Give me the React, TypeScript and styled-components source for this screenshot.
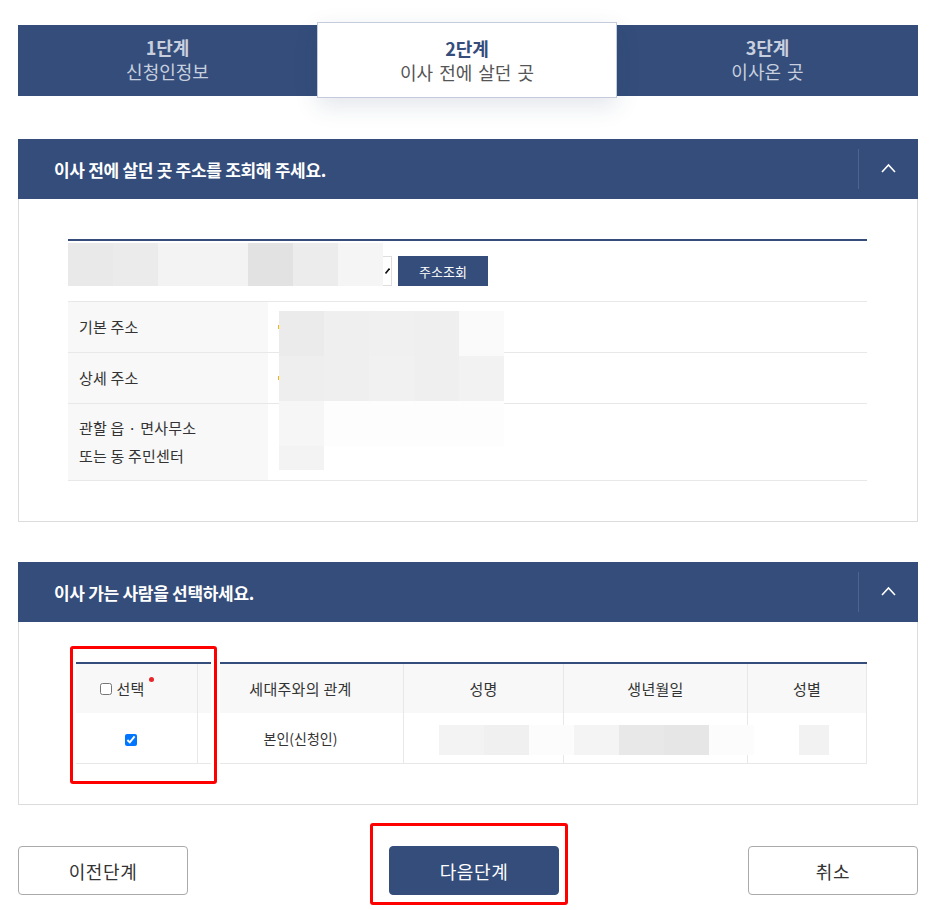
import React from 'react';
import styled, { createGlobalStyle } from 'styled-components';

const NAVY = '#344d7a';

const GlobalStyle = createGlobalStyle`
  body {
    margin: 0;
    background: #fff;
    font-family: 'Noto Sans CJK KR', 'Noto Sans', sans-serif;
    color: #333;
  }
`;

const steps = [
  { no: '1단계', name: '신청인정보', active: false },
  { no: '2단계', name: '이사 전에 살던 곳', active: true },
  { no: '3단계', name: '이사온 곳', active: false },
];

const searchTiles = ['#e9e9e9', '#ebebeb', '#f3f3f3', '#f3f3f3', '#e2e2e2', '#ececec', '#f5f5f5'];

const addressTiles = [
  { h: 45, colors: ['#ebebeb', '#efefef', '#f0f0f0', '#efefef', '#fafafa'] },
  { h: 45, colors: ['#eeeeee', '#efefef', '#f1f1f1', '#efefef', '#f2f2f2'] },
  { h: 45, colors: ['#f6f6f6', '#fdfdfd', '#fdfdfd', '#fdfdfd', '#fdfdfd'] },
  { h: 24, colors: ['#f3f3f3'] },
];

const personTiles = ['#f3f3f3', '#f0f0f0', '#fcfcfc', '#f4f4f4', '#e8e8e8', '#e5e6e5', '#fcfcfc'];

const addressRows = [
  { label: ['기본 주소'], h: 50, mark: true },
  { label: ['상세 주소'], h: 50, mark: true },
  { label: ['관할 읍 · 면사무소', '또는 동 주민센터'], h: 76, mark: false },
];

const Chevron = () => (
  <svg width="15" height="10" viewBox="0 0 15 10">
    <polyline points="1,9 7.5,2 14,9" fill="none" stroke="#fff" strokeWidth="1.6" />
  </svg>
);

const Mosaic: React.FC<{ colors: string[]; w: number; h: number }> = ({ colors, w, h }) => (
  <TileRow>
    {colors.map((c, i) => (
      <Tile key={i} $c={c} $w={w} $h={h} />
    ))}
  </TileRow>
);

const App: React.FC = () => {
  return (
    <>
      <GlobalStyle />
      <Page>
        <Steps>
          {steps.map((s) => (
            <Step key={s.no} $active={s.active}>
              <StepNo $active={s.active}>{s.no}</StepNo>
              <StepName $active={s.active}>{s.name}</StepName>
            </Step>
          ))}
        </Steps>

        <Section $gap={43}>
          <SectionHeader>
            <SectionTitle>이사 전에 살던 곳 주소를 조회해 주세요.</SectionTitle>
            <Toggle>
              <Chevron />
            </Toggle>
          </SectionHeader>
          <SectionBody>
            <SearchRow>
              <Mosaic colors={searchTiles} w={45} h={43} />
              <SelectStub>
                <svg width="5" height="6" viewBox="0 0 5 6">
                  <line x1="0.5" y1="5.5" x2="4.5" y2="0.5" stroke="#111" strokeWidth="1.6" />
                </svg>
              </SelectStub>
              <SearchButton>주소조회</SearchButton>
            </SearchRow>
            <AddressTableWrap>
              <AddressTable>
                {addressRows.map((r) => (
                  <React.Fragment key={r.label[0]}>
                    <LabelCell $h={r.h}>
                      {r.label.map((l) => (
                        <LabelLine key={l}>{l}</LabelLine>
                      ))}
                    </LabelCell>
                    <ValueCell $h={r.h}>{r.mark && <Mark />}</ValueCell>
                  </React.Fragment>
                ))}
              </AddressTable>
              <Redaction $top={10} $left={211}>
                {addressTiles.map((row, i) => (
                  <Mosaic key={i} colors={row.colors} w={45} h={row.h} />
                ))}
              </Redaction>
            </AddressTableWrap>
          </SectionBody>
        </Section>

        <Section $gap={40}>
          <SectionHeader>
            <SectionTitle>이사 가는 사람을 선택하세요.</SectionTitle>
            <Toggle>
              <Chevron />
            </Toggle>
          </SectionHeader>
          <SectionBody>
            <PersonTableWrap>
              <PersonTable>
                <colgroup>
                  <col style={{ width: 129 }} />
                  <col style={{ width: 206 }} />
                  <col style={{ width: 160 }} />
                  <col style={{ width: 184 }} />
                  <col style={{ width: 119 }} />
                </colgroup>
                <thead>
                  <tr>
                    <Th>
                      <SelectHead>
                        <CheckBox type="checkbox" readOnly />
                        선택
                        <RequiredDot />
                      </SelectHead>
                    </Th>
                    <Th>세대주와의 관계</Th>
                    <Th>성명</Th>
                    <Th>생년월일</Th>
                    <Th>성별</Th>
                  </tr>
                </thead>
                <tbody>
                  <tr>
                    <Td>
                      <CheckBox type="checkbox" checked readOnly />
                    </Td>
                    <Td>본인(신청인)</Td>
                    <Td />
                    <Td />
                    <Td />
                  </tr>
                </tbody>
              </PersonTable>
              <Redaction $top={63} $left={371}>
                <Mosaic colors={personTiles} w={45} h={30} />
              </Redaction>
              <Redaction $top={63} $left={731}>
                <Mosaic colors={['#f2f2f2']} w={30} h={30} />
              </Redaction>
            </PersonTableWrap>
            <Highlight $top={24} $left={51} $w={147} $h={138} />
          </SectionBody>
        </Section>

        <ButtonRow>
          <OutlineButton>이전단계</OutlineButton>
          <PrimaryButton>다음단계</PrimaryButton>
          <OutlineButton>취소</OutlineButton>
          <Highlight $top={-23} $left={352} $w={198} $h={82} />
        </ButtonRow>
      </Page>
    </>
  );
};

export default App;

const Page = styled.div`
  width: 900px;
  margin-left: 18px;
  padding: 25px 0 16px;
`;

const Steps = styled.div`
  display: grid;
  grid-template-columns: 299px 300px 1fr;
  height: 71px;
  background: ${NAVY};
`;

const Step = styled.div<{ $active: boolean }>`
  display: flex;
  flex-direction: column;
  align-items: center;
  padding-top: ${({ $active }) => ($active ? '13px' : '10px')};
  box-sizing: border-box;
  ${({ $active }) =>
    $active &&
    `
    margin: -3px 0 -2px;
    background: #fff;
    border: 1px solid #c3cbdc;
    box-shadow: 0 8px 22px rgba(40, 60, 100, 0.13);
  `}
`;

const StepNo = styled.div<{ $active: boolean }>`
  font-size: 18px;
  font-weight: 700;
  line-height: 24px;
  color: ${({ $active }) => ($active ? NAVY : '#c8d0df')};
`;

const StepName = styled.div<{ $active: boolean }>`
  font-size: 18px;
  line-height: 24px;
  word-spacing: 2px;
  color: ${({ $active }) => ($active ? '#555' : '#c8d0df')};
`;

const Section = styled.section<{ $gap: number }>`
  margin-top: ${({ $gap }) => $gap}px;
`;

const SectionHeader = styled.div`
  display: flex;
  align-items: center;
  height: 60px;
  padding-left: 36px;
  background: ${NAVY};
`;

const SectionTitle = styled.h2`
  flex: 1;
  margin: 0;
  font-size: 17px;
  font-weight: 700;
  letter-spacing: -0.3px;
  color: #fff;
`;

const Toggle = styled.div`
  display: flex;
  align-items: center;
  justify-content: center;
  width: 60px;
  height: 40px;
  padding-bottom: 2px;
  border-left: 1px solid rgba(255, 255, 255, 0.13);
  box-sizing: border-box;
`;

const SectionBody = styled.div`
  position: relative;
  padding: 40px 50px 40px 49px;
  border: 1px solid #dcdcdc;
  border-top: none;
`;

const SearchRow = styled.div`
  display: flex;
  align-items: flex-end;
  padding-top: 2px;
  border-top: 2px solid ${NAVY};
`;

const TileRow = styled.div`
  display: flex;
`;

const Tile = styled.div<{ $c: string; $w: number; $h: number }>`
  width: ${({ $w }) => $w}px;
  height: ${({ $h }) => $h}px;
  background: ${({ $c }) => $c};
`;

const SelectStub = styled.div`
  display: flex;
  align-items: center;
  width: 9px;
  height: 30px;
  padding-left: 2px;
  border: 1px solid #dedede;
  border-left: none;
  box-sizing: border-box;
`;

const SearchButton = styled.button`
  width: 90px;
  height: 30px;
  margin-left: 6px;
  border: none;
  background: ${NAVY};
  color: #fff;
  font-family: inherit;
  font-size: 13px;
`;

const AddressTableWrap = styled.div`
  position: relative;
  margin-top: 15px;
`;

const AddressTable = styled.div`
  display: grid;
  grid-template-columns: 200px 1fr;
  border-top: 1px solid #e8e8e8;
`;

const LabelCell = styled.div<{ $h: number }>`
  display: flex;
  flex-direction: column;
  justify-content: center;
  min-height: ${({ $h }) => $h}px;
  padding-left: 11px;
  background: #f8f8f8;
  border-bottom: 1px solid #e8e8e8;
`;

const LabelLine = styled.div`
  font-size: 15px;
  line-height: 28px;
  letter-spacing: 0.2px;
  color: #333;
`;

const ValueCell = styled.div<{ $h: number }>`
  display: flex;
  align-items: center;
  min-height: ${({ $h }) => $h}px;
  padding-left: 10px;
  border-bottom: 1px solid #e8e8e8;
`;

const Mark = styled.span`
  width: 2px;
  height: 4px;
  background: #f5b400;
`;

const Redaction = styled.div<{ $top: number; $left: number }>`
  position: absolute;
  top: ${({ $top }) => $top}px;
  left: ${({ $left }) => $left}px;
`;

const PersonTableWrap = styled.div`
  position: relative;
  width: 798px;
`;

const PersonTable = styled.table`
  width: 798px;
  border-collapse: collapse;
  table-layout: fixed;
  border-top: 2px solid ${NAVY};
  font-size: 15px;
  color: #333;
`;

const Th = styled.th`
  height: 49px;
  padding: 0;
  font-weight: 400;
  letter-spacing: 0.3px;
  background: #f8f8f8;
  border-left: 1px solid #e8e8e8;
  border-right: 1px solid #e8e8e8;
  text-align: center;
`;

const Td = styled.td`
  height: 50px;
  padding: 0;
  font-size: 14px;
  text-align: center;
  border-left: 1px solid #e8e8e8;
  border-right: 1px solid #e8e8e8;
  border-bottom: 1px solid #e8e8e8;
`;

const SelectHead = styled.span`
  display: inline-flex;
  align-items: center;
  margin-right: 12px;
`;

const CheckBox = styled.input`
  width: 12px;
  height: 12px;
  margin: 0 4px 0 0;
  vertical-align: middle;
`;

const RequiredDot = styled.span`
  width: 5px;
  height: 5px;
  margin: -18px 0 0 4px;
  border-radius: 50%;
  background: #e8262b;
`;

const ButtonRow = styled.div`
  position: relative;
  display: flex;
  justify-content: space-between;
  margin-top: 41px;
`;

const OutlineButton = styled.button`
  width: 170px;
  height: 49px;
  border: 1px solid #aaa;
  border-radius: 4px;
  background: #fff;
  color: #333;
  font-family: inherit;
  font-size: 18px;
  letter-spacing: 0.6px;
`;

const PrimaryButton = styled(OutlineButton)`
  margin-left: 12px;
  border-color: ${NAVY};
  background: ${NAVY};
  color: #fff;
`;

const Highlight = styled.div<{ $top: number; $left: number; $w: number; $h: number }>`
  position: absolute;
  top: ${({ $top }) => $top}px;
  left: ${({ $left }) => $left}px;
  width: ${({ $w }) => $w}px;
  height: ${({ $h }) => $h}px;
  box-sizing: border-box;
  border: 3px solid #ff0000;
  border-radius: 3px;
  box-shadow: 0 0 0 3px #fff, inset 0 0 0 3px #fff;
  pointer-events: none;
`;
